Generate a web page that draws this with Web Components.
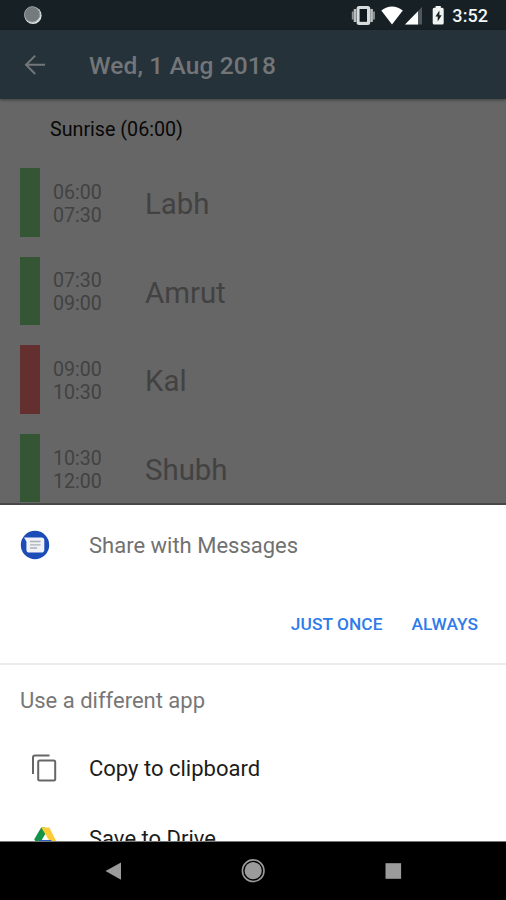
<!DOCTYPE html>
<html lang="en"><head><meta charset="utf-8"><title>Share with Messages</title>
<style>html,body{margin:0;width:506px;height:900px;overflow:hidden;background:#666;font-family:Roboto,sans-serif}</style></head>
<body><phone-screen></phone-screen>
<script>
function define(name, html) {
  customElements.define(name, class extends HTMLElement {
    constructor() {
      super();
      const t = document.createElement('template');
      t.innerHTML = html;
      this.attachShadow({ mode: 'open' }).appendChild(t.content.cloneNode(true));
    }
  });
}
define('status-bar', `<style>
:host{display:flex;height:30px;background:#162025;align-items:center;justify-content:space-between;flex:none;color:#f4f5f5}
svg{display:block}.right{display:flex;align-items:center;padding-right:18px}
.time{font-size:18px;font-weight:500;line-height:30px;margin-left:6px;padding-top:2px;letter-spacing:.05px}
</style>
<svg width="50" height="30"><circle cx="33" cy="15.4" r="8.6" fill="#dce0e1"/><circle cx="32.2" cy="14.4" r="7.6" fill="#737b7f"/><circle cx="32.2" cy="14.4" r="7.7" fill="none" stroke="#959b9e"/></svg>
<div class="right"><svg width="96" height="30" viewBox="350 0 96 30">
<path d="M352.7 11.5v8M374 11.5v8" stroke="#8f9598" stroke-width="1.8"/><path d="M355 9v13M371.6 9v13" stroke="#b9bdbf" stroke-width="2.6"/>
<rect x="356.6" y="6" width="13.6" height="19" rx="2.5" fill="#d8dbdc"/><rect x="359.6" y="9" width="7.4" height="12.8" fill="#0f181c"/>
<path d="M381.3 10.4Q392 2.6 402.8 10.4L392 24.4z" fill="#fff"/>
<path d="M422 7v17.6h-17z" fill="#4e575c"/><path d="M418 11.3v13.3h-13z" fill="#fff"/>
<path d="M435.6 6h5.2v1.8h1.4q1.5 0 1.5 1.5v13.6q0 1.7-1.5 1.7h-8q-1.5 0-1.5-1.7V9.3q0-1.5 1.5-1.5h1.4z" fill="#f2f3f3"/>
<path d="M439.4 10.5l-4 6h2.3v5l4-6.2h-2.3z" fill="#162025"/></svg><span class="time">3:52</span></div>`);
define('app-bar', `<style>
:host{display:flex;height:69px;background:#25323a;align-items:center;flex:none;box-shadow:0 1px 3px #0006;position:relative;color:#737678}
svg{width:89px;height:69px}.t{font-size:24.5px;font-weight:500;line-height:30px;padding-top:3px;letter-spacing:.12px}
</style><svg viewBox="0 0 89 69"><path d="M45 34.8H27M35.2 25.6L26 34.8l9.2 9.2" fill="none" stroke="#737678" stroke-width="2"/></svg><span class="t"><slot></slot></span>`);
define('time-slot', `<style>
:host{display:flex;height:68.6px;align-items:center;margin-bottom:20px;padding-left:20px;color:#424242}
.bar{width:20px;height:100%;background:var(--mark,#345635);margin-right:13px}
.times{width:92px;font-size:19.6px;line-height:23px;padding-top:3px}
.name{font-size:29.4px;line-height:36px;padding-top:4px}
</style><div class="bar"></div><div class="times"><slot name="from"></slot><br><slot name="to"></slot></div><div class="name"><slot></slot></div>`);
define('day-list', `<style>
:host{display:block;height:406px;overflow:hidden;background:#666;border-bottom:2px solid #484848;box-sizing:border-box}
.h{font-size:19.7px;line-height:24px;padding:19px 0 26px 50px;color:#080808}
</style><div class="h"><slot name="heading"></slot></div><slot></slot>`);
define('app-row', `<style>
:host{display:flex;height:70px;align-items:center;color:#1c1c1c;font-size:22px;line-height:28px}
.icon{width:89px;height:70px;flex:none}
</style><div class="icon"><slot name="icon"></slot></div><span><slot></slot></span>`);
define('share-sheet', `<style>
:host{display:block;height:337px;background:#fff;overflow:hidden;border-bottom:1px solid #777;box-sizing:border-box;flex:none}
svg{display:block}.first{height:80px;color:#717171}.first span{position:relative;top:1px}
.actions{display:flex;justify-content:flex-end;gap:29px;height:78px;align-items:center;padding-right:28px;font-size:17.3px;font-weight:500;letter-spacing:.08px;color:#2f7bea}
.alt{border-top:2px solid #ebebeb;padding:22px 0 0 20px;height:47px;font-size:22px;line-height:28px;color:#777}
</style>
<app-row class="first"><svg slot="icon" width="89" height="70"><circle cx="35" cy="35" r="14.2" fill="#1c4cb8"/><path d="M24 27.4h17.5q2.8 0 2.8 2.8v9.6q0 2.8-2.8 2.8H29.2q-2.8 0-2.8-2.8v-8.2z" fill="#f0f2f6"/><path d="M30 31.5h10.6M30 34.8h10.6M30 38h7" stroke="#aab0b8" stroke-width="1.3"/></svg><span>Share with Messages</span></app-row>
<div class="actions"><span>JUST ONCE</span><span>ALWAYS</span></div>
<div class="alt">Use a different app</div>
<app-row><svg slot="icon" width="89" height="70"><path d="M49.5 21.5H35q-2 0-2 2V40" fill="none" stroke="#666" stroke-width="2"/><rect x="38.2" y="26.5" width="17" height="20" rx="1.5" fill="none" stroke="#666" stroke-width="2"/></svg>Copy to clipboard</app-row>
<app-row><svg slot="icon" width="89" height="70"><path d="M41.2 23.5h3.6l2 3.8-8.6 15-4-7z" fill="#159447"/><path d="M41.2 23.5h8.2l7.2 14.5h-6.4z" fill="#fdcb35"/><path d="M40 36h11.2l4 8H36z" fill="#2c5dc4"/></svg>Save to Drive</app-row>`);
define('nav-bar', `<style>:host{display:block;height:58px;background:#000;flex:none}svg{display:block}</style>
<svg width="506" height="58" viewBox="0 842 506 58" fill="#9b9b9b"><path d="M105.5 871L121 862.4v17.4z"/><circle cx="253.2" cy="870.7" r="8.6"/><circle cx="253.2" cy="870.7" r="10.8" fill="none" stroke="#9b9b9b" stroke-width="1.6"/><rect x="385.5" y="863.2" width="15.6" height="15.6"/></svg>`);
define('phone-screen', `<style>:host{display:flex;flex-direction:column;width:506px;height:900px;overflow:hidden}day-list{flex:none}.red{--mark:#642f2f}</style>
<status-bar></status-bar><app-bar>Wed, 1 Aug 2018</app-bar>
<day-list><span slot="heading">Sunrise (06:00)</span>
<time-slot><span slot="from">06:00</span><span slot="to">07:30</span>Labh</time-slot>
<time-slot><span slot="from">07:30</span><span slot="to">09:00</span>Amrut</time-slot>
<time-slot class="red"><span slot="from">09:00</span><span slot="to">10:30</span>Kal</time-slot>
<time-slot><span slot="from">10:30</span><span slot="to">12:00</span>Shubh</time-slot></day-list>
<share-sheet></share-sheet><nav-bar></nav-bar>`);
</script></body></html>
